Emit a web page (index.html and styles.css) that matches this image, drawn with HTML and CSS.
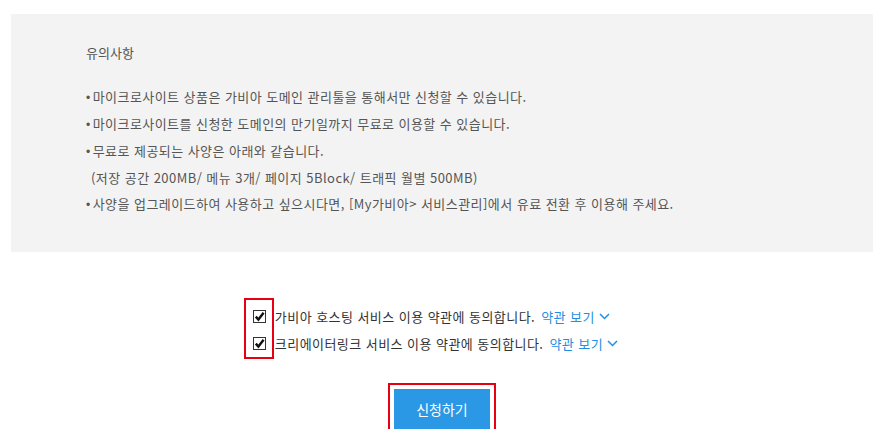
FILE: index.html
```html
<!DOCTYPE html>
<html lang="ko">
<head>
    <meta charset="UTF-8">
    <title>마이크로사이트 신청</title>
    <link rel="stylesheet" href="styles.css">
</head>
<body>
    <div class="notice">
        <h4>유의사항</h4>
        <ul>
            <li>마이크로사이트 상품은 가비아 도메인 관리툴을 통해서만 신청할 수 있습니다.</li>
            <li>마이크로사이트를 신청한 도메인의 만기일까지 무료로 이용할 수 있습니다.</li>
            <li>무료로 제공되는 사양은 아래와 같습니다.<br><span class="sub">(저장 공간 200MB/ 메뉴 3개/ 페이지 5Block/ 트래픽 월별 500MB)</span></li>
            <li>사양을 업그레이드하여 사용하고 싶으시다면, [My가비아&gt; 서비스관리]에서 유료 전환 후 이용해 주세요.</li>
        </ul>
    </div>

    <div class="agree">
        <div class="agree-list">
            <label class="agree-row">
                <span class="check"><svg width="13" height="13" viewBox="0 0 13 13"><rect x="0.5" y="0.5" width="12" height="12" fill="#fff" stroke="#333"/><path d="M2.8 6.6 L5.4 9.6 L10.6 2.8" fill="none" stroke="#111" stroke-width="2.4"/></svg></span>
                가비아 호스팅 서비스 이용 약관에 동의합니다.
                <a class="terms" href="#">약관 보기 <svg width="11" height="7" viewBox="0 0 11 7"><path d="M1 1 L5.5 5.5 L10 1" fill="none" stroke="#1e8fe1" stroke-width="1.5"/></svg></a>
            </label>
            <label class="agree-row">
                <span class="check"><svg width="13" height="13" viewBox="0 0 13 13"><rect x="0.5" y="0.5" width="12" height="12" fill="#fff" stroke="#333"/><path d="M2.8 6.6 L5.4 9.6 L10.6 2.8" fill="none" stroke="#111" stroke-width="2.4"/></svg></span>
                크리에이터링크 서비스 이용 약관에 동의합니다.
                <a class="terms" href="#">약관 보기 <svg width="11" height="7" viewBox="0 0 11 7"><path d="M1 1 L5.5 5.5 L10 1" fill="none" stroke="#1e8fe1" stroke-width="1.5"/></svg></a>
            </label>
            <span class="mark"></span>
        </div>
    </div>

    <div class="controls">
        <button class="apply-btn">신청하기</button>
    </div>
</body>
</html>
```

FILE: styles.css
```css
* {
    margin: 0;
    padding: 0;
    box-sizing: border-box;
}

body {
    font-family: "Noto Sans CJK KR", "Noto Sans", sans-serif;
    font-size: 13px;
    color: #555;
    background: #fff;
}

.notice {
    margin: 14px 7px 0 11px;
    height: 238px;
    background: #f3f3f3;
    padding: 26px 20px 0 75px;
}

.notice h4 {
    font-size: 13px;
    font-weight: normal;
    line-height: 26px;
    margin-bottom: 18px;
}

.notice ul {
    list-style: none;
}

.notice li {
    line-height: 26px;
    letter-spacing: 0.45px;
}

.notice li:before {
    content: "•";
    font-family: "Liberation Sans", sans-serif;
    font-size: 12px;
    margin-right: 2px;
}

.notice .sub {
    padding-left: 5px;
}

.agree {
    display: flex;
    justify-content: center;
    padding-top: 51px;
}

.agree-list {
    position: relative;
    padding-left: 9px;
    margin-left: -18px;
}

.agree-row {
    display: flex;
    align-items: center;
    height: 27px;
    color: #333;
    letter-spacing: 0.45px;
}

.check {
    display: inline-flex;
    width: 13px;
    height: 13px;
    margin-right: 9px;
}

.terms {
    color: #1e8fe1;
    text-decoration: none;
    margin-left: 6px;
    display: inline-flex;
    align-items: center;
    gap: 4px;
}

.mark {
    position: absolute;
    left: 0;
    top: -5px;
    width: 30px;
    height: 61px;
    border: 2px solid #e60012;
}

.controls {
    display: flex;
    justify-content: center;
    padding: 32px 0 0 4px;
}

.apply-btn {
    width: 96px;
    height: 40px;
    background: #2a98e5;
    color: #fff;
    border: none;
    font-family: inherit;
    font-size: 14px;
    outline: 2px solid #e60012;
    outline-offset: 4px;
}
```
